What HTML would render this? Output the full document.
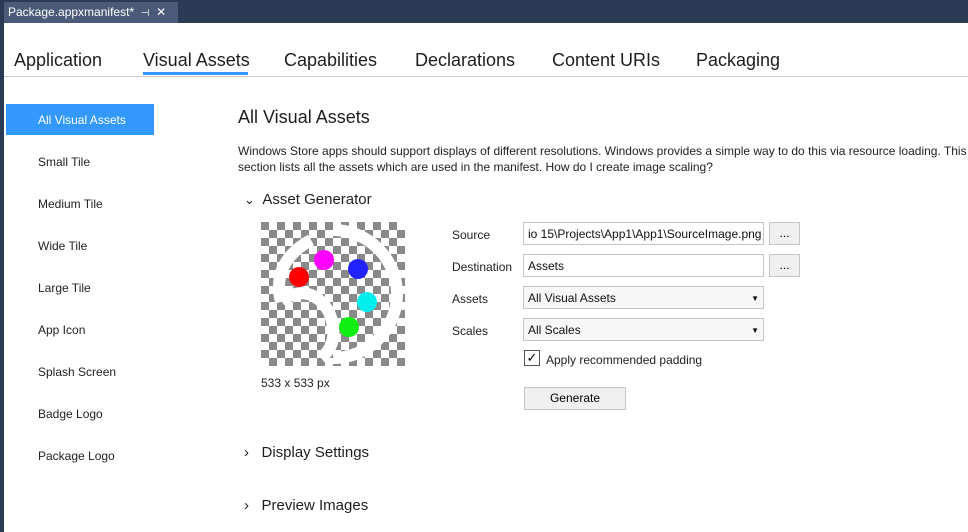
<!DOCTYPE html>
<html><head><style>
*{margin:0;padding:0;box-sizing:border-box}
body{width:968px;height:532px;overflow:hidden;background:#2b3a55;font-family:"Liberation Sans",sans-serif;position:relative}
.main{position:absolute;left:4px;top:23px;right:0;bottom:0;background:#fff}
.tab{position:absolute;left:4px;top:2px;width:174px;height:21px;background:#4a5a78;color:#fff;font-size:12px;line-height:21px;padding-left:4px;white-space:nowrap}
.top{position:absolute;top:50px;font-size:18px;color:#1e1e1e}
.line{position:absolute;left:4px;right:0;top:76px;height:1px;background:#ccc}
.side{position:absolute;left:38px;font-size:12px;color:#222}
.a{position:absolute;font-size:12px;color:#222}
.box{position:absolute;border:1px solid #c6c6c6;background:#fff;font-size:12px;height:23px;line-height:23px;padding-left:4px;color:#111;white-space:nowrap;overflow:hidden}
.btn{position:absolute;border:1px solid #c6c6c6;background:#f0f0f0;font-size:12px;text-align:center}
.h{position:absolute;font-size:15px;color:#1e1e1e}
</style></head><body>
<div class="tab">Package.appxmanifest* &nbsp;<span style="font-size:10px">⊣</span> &nbsp;✕</div>
<div class="main"></div>
<div class="top" style="left:14px">Application</div>
<div class="top" style="left:143px">Visual Assets</div>
<div style="position:absolute;left:143px;top:72px;width:105px;height:3px;background:#3399ff"></div>
<div class="top" style="left:284px">Capabilities</div>
<div class="top" style="left:415px">Declarations</div>
<div class="top" style="left:552px">Content URIs</div>
<div class="top" style="left:696px">Packaging</div>
<div class="line"></div>
<div style="position:absolute;left:6px;top:104px;width:148px;height:31px;background:#3399ff"></div>
<div class="side" style="top:113px;color:#fff">All Visual Assets</div>
<div class="side" style="top:155px">Small Tile</div>
<div class="side" style="top:197px">Medium Tile</div>
<div class="side" style="top:239px">Wide Tile</div>
<div class="side" style="top:281px">Large Tile</div>
<div class="side" style="top:323px">App Icon</div>
<div class="side" style="top:365px">Splash Screen</div>
<div class="side" style="top:407px">Badge Logo</div>
<div class="side" style="top:449px">Package Logo</div>
<div class="h" style="left:238px;top:107px;font-size:18px">All Visual Assets</div>
<div class="a" style="left:238px;top:143px;line-height:16px;width:730px">Windows Store apps should support displays of different resolutions. Windows provides a simple way to do this via resource loading. This section lists all the assets which are used in the manifest. How do I create image scaling?</div>
<div class="h" style="left:244px;top:191px"><span style="font-size:13px">⌄</span>&nbsp; Asset Generator</div>
<svg style="position:absolute;left:261px;top:222px" width="144" height="144">
<defs><pattern id="c" width="16" height="16" patternUnits="userSpaceOnUse"><rect width="16" height="16" fill="#fff"/><rect width="8" height="8" fill="#8a8a8a"/><rect x="8" y="8" width="8" height="8" fill="#8a8a8a"/></pattern></defs>
<rect width="144" height="144" fill="url(#c)"/>
<path d="M72 8 A64 64 0 1 1 72 136 M20 80 Q10 40 50 18 M20 78 Q50 60 68 90 Q80 120 60 136" stroke="#fff" stroke-width="12" fill="none"/>
<circle cx="38" cy="55" r="10" fill="#f00"/><circle cx="63" cy="38" r="10" fill="#f0f"/><circle cx="97" cy="47" r="10" fill="#22f"/><circle cx="106" cy="80" r="10" fill="#0ee"/><circle cx="88" cy="105" r="10" fill="#1e1"/>
</svg>
<div class="a" style="left:261px;top:376px">533 x 533 px</div>
<div class="a" style="left:452px;top:228px">Source</div>
<div class="a" style="left:452px;top:260px">Destination</div>
<div class="a" style="left:452px;top:292px">Assets</div>
<div class="a" style="left:452px;top:324px">Scales</div>
<div class="box" style="left:523px;top:222px;width:241px">io 15\Projects\App1\App1\SourceImage.png</div>
<div class="box" style="left:523px;top:254px;width:241px">Assets</div>
<div class="box" style="left:523px;top:286px;width:241px;background:#f7f7f7">All Visual Assets<span style="position:absolute;right:4px;font-size:8px">▼</span></div>
<div class="box" style="left:523px;top:318px;width:241px;background:#f7f7f7">All Scales<span style="position:absolute;right:4px;font-size:8px">▼</span></div>
<div class="btn" style="left:769px;top:222px;width:31px;height:23px;line-height:20px">...</div>
<div class="btn" style="left:769px;top:254px;width:31px;height:23px;line-height:20px">...</div>
<div style="position:absolute;left:524px;top:350px;width:16px;height:16px;border:1px solid #555;font-size:13px;line-height:14px;text-align:center">✓</div>
<div class="a" style="left:546px;top:353px">Apply recommended padding</div>
<div class="btn" style="left:524px;top:387px;width:102px;height:23px;line-height:21px">Generate</div>
<div class="h" style="left:244px;top:444px">›&nbsp;&nbsp; Display Settings</div>
<div class="h" style="left:244px;top:497px">›&nbsp;&nbsp; Preview Images</div>
</body></html>
